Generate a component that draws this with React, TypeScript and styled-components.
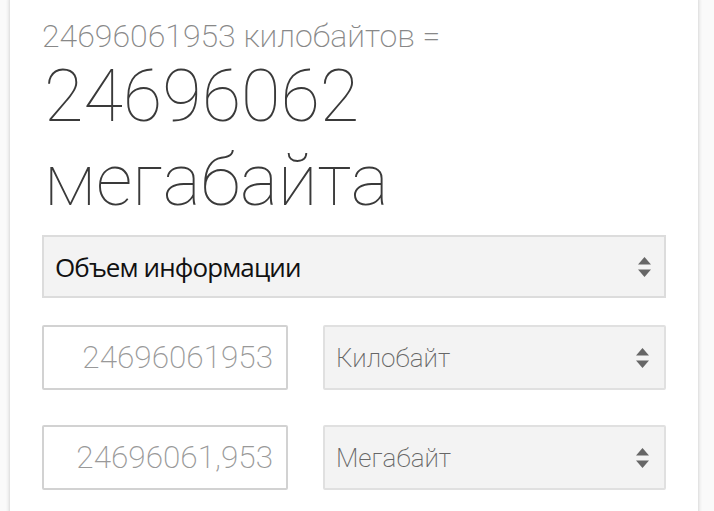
import React from "react";
import styled, { createGlobalStyle } from "styled-components";

const Global = createGlobalStyle`
  html, body { margin: 0; padding: 0; background: #fafafa; }
  body { font-family: Roboto, "Liberation Sans", sans-serif; overflow: hidden; }
  * { box-sizing: border-box; }
`;

const Card = styled.div`
  margin: -12px 0 0 10px;
  width: 688px;
  height: 540px;
  background: #fff;
  border-radius: 12px;
  box-shadow: 0 0 4px rgba(0, 0, 0, 0.22);
  padding: 30px 32px 0 32px;
  display: flex;
  flex-direction: column;
`;

const Source = styled.div`
  font-family: Roboto, sans-serif;
  font-size: 32px;
  font-weight: 200;
  color: #888;
  line-height: 37px;
`;

const Result = styled.div`
  font-family: Roboto, sans-serif;
  font-size: 72px;
  font-weight: 100;
  color: #3a3a3a;
  line-height: 84px;
  margin-left: 2px;
`;

const Category = styled.div`
  margin-top: 12px;
  height: 63px;
  background: #f3f3f3;
  border: 2px solid #dcdcdc;
  display: flex;
  align-items: center;
  justify-content: space-between;
  padding: 0 12px 0 11px;
  font-family: "Open Sans", "Noto Sans", sans-serif;
  font-size: 26px;
  color: #111;
  letter-spacing: -0.9px;
`;

const Row = styled.div<{ $gap: number }>`
  margin-top: ${(p) => p.$gap}px;
  display: grid;
  grid-template-columns: 246px 343px;
  column-gap: 35px;
  height: 65px;
`;

const NumberBox = styled.div`
  border: 2px solid #d2d2d2;
  border-radius: 2px;
  background: #fff;
  display: flex;
  align-items: center;
  justify-content: flex-end;
  padding-right: 13px;
  font-family: Roboto, sans-serif;
  font-size: 31.5px;
  font-weight: 200;
  color: #999;
`;

const UnitSelect = styled.div`
  border: 2px solid #e0e0e0;
  border-radius: 2px;
  background: #f3f3f3;
  display: flex;
  align-items: center;
  justify-content: space-between;
  padding: 0 14px 0 11px;
  font-family: Roboto, sans-serif;
  font-size: 26px;
  font-weight: 200;
  color: #666;
`;

const Arrows = () => (
  <svg width="15" height="22" viewBox="0 0 15 22">
    <path d="M7.5 1 L14 8.5 L1 8.5 Z" fill="#666" />
    <path d="M7.5 21 L14 13.5 L1 13.5 Z" fill="#666" />
  </svg>
);

export default function App() {
  return (
    <>
      <Global />
      <Card>
        <Source>24696061953 килобайтов =</Source>
        <Result>
          24696062
          <br />
          мегабайта
        </Result>
        <Category>
          <span>Объем информации</span>
          <Arrows />
        </Category>
        <Row $gap={27}>
          <NumberBox>24696061953</NumberBox>
          <UnitSelect>
            <span>Килобайт</span>
            <Arrows />
          </UnitSelect>
        </Row>
        <Row $gap={35}>
          <NumberBox>24696061,953</NumberBox>
          <UnitSelect>
            <span>Мегабайт</span>
            <Arrows />
          </UnitSelect>
        </Row>
      </Card>
    </>
  );
}
